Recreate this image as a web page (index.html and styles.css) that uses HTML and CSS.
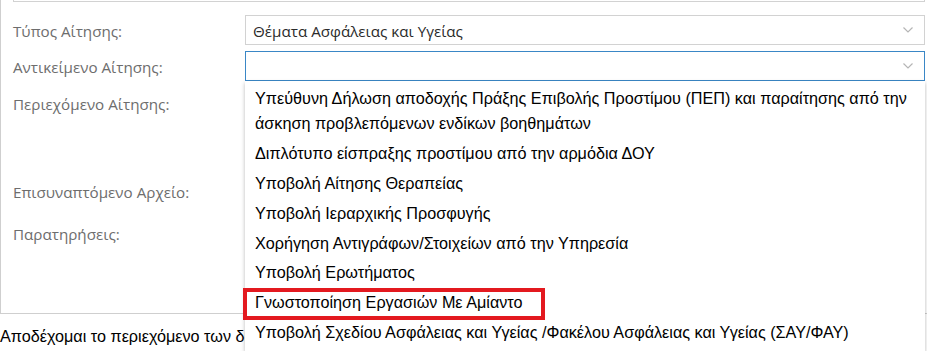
FILE: index.html
```html
<!DOCTYPE html>
<html lang="el">
<head>
<meta charset="utf-8">
<link rel="stylesheet" href="styles.css">
</head>
<body>
<div class="panel">
  <div class="prev-field"></div>
  <div class="form">
    <div class="label">Τύπος Αίτησης:</div>
    <div class="select"><span class="value">Θέματα Ασφάλειας και Υγείας</span><svg class="chev" width="10" height="6" viewBox="0 0 10 6"><path d="M0.5 0.5 L5 5 L9.5 0.5" fill="none" stroke="#b5b5b5" stroke-width="1.2"/></svg></div>

    <div class="label">Αντικείμενο Αίτησης:</div>
    <div class="select focus"><span class="value"></span><svg class="chev" width="10" height="6" viewBox="0 0 10 6"><path d="M0.5 0.5 L5 5 L9.5 0.5" fill="none" stroke="#b5b5b5" stroke-width="1.2"/></svg></div>

    <div class="label">Περιεχόμενο Αίτησης:</div>
    <div class="textarea"></div>

    <div class="label">Επισυναπτόμενο Αρχείο:</div>
    <div class="file"></div>

    <div class="label">Παρατηρήσεις:</div>
    <div class="textarea"></div>
  </div>
</div>
<p class="accept">Αποδέχομαι το περιεχόμενο των δηλώσεων και των όρων χρήσης της ηλεκτρονικής υπηρεσίας</p>

<ul class="dropdown">
  <li>Υπεύθυνη Δήλωση αποδοχής Πράξης Επιβολής Προστίμου (ΠΕΠ) και παραίτησης από την άσκηση προβλεπόμενων ενδίκων βοηθημάτων</li>
  <li>Διπλότυπο είσπραξης προστίμου από την αρμόδια ΔΟΥ</li>
  <li>Υποβολή Αίτησης Θεραπείας</li>
  <li>Υποβολή Ιεραρχικής Προσφυγής</li>
  <li>Χορήγηση Αντιγράφων/Στοιχείων από την Υπηρεσία</li>
  <li>Υποβολή Ερωτήματος</li>
  <li>Γνωστοποίηση Εργασιών Με Αμίαντο</li>
  <li>Υποβολή Σχεδίου Ασφάλειας και Υγείας /Φακέλου Ασφάλειας και Υγείας (ΣΑΥ/ΦΑΥ)</li>
</ul>
<div class="highlight"></div>
</body>
</html>
```
FILE: styles.css
```css
html, body {
  margin: 0;
  padding: 0;
  background: #fff;
  overflow: hidden;
  width: 927px;
  height: 351px;
}
body {
  position: relative;
  font-family: "Open Sans", "Noto Sans", sans-serif;
}
.panel {
  width: 914px;
  height: 313px;
  border-left: 1px solid #cfcfcf;
  border-bottom: 1px solid #cfcfcf;
  padding-left: 12px;
  box-sizing: content-box;
}
.prev-field {
  width: 910px;
  height: 1px;
  border: 1px solid #d2d2d2;
  border-top: none;
}
.form {
  display: grid;
  grid-template-columns: 232px 680px;
  grid-template-rows: 30px 30px 82px 30px 82px;
  row-gap: 6px;
  margin-top: 13px;
}
.label {
  font-size: 15.2px;
  color: #6d6d6d;
  line-height: 30px;
  padding-top: 1px;
  white-space: nowrap;
}
.select {
  box-sizing: border-box;
  height: 30px;
  border: 1px solid #d2d2d2;
  display: flex;
  align-items: center;
  justify-content: space-between;
  padding: 2px 11px 0 7px;
  font-size: 15.2px;
  color: #2b2b2b;
}
.select.focus {
  border-color: #3a87c6;
}
.chev { display: block; margin-top: -2px; }
.textarea, .file {
  box-sizing: border-box;
  border: 1px solid #d2d2d2;
}
.form > :nth-child(5), .form > :nth-child(6) { margin-top: 1px; }
.form > :nth-child(7), .form > :nth-child(8) { margin-top: 1px; }
.form > :nth-child(9), .form > :nth-child(10) { margin-top: 7px; }
.accept {
  margin: 0;
  padding-top: 8px;
  font-family: "Liberation Sans", Arial, sans-serif;
  font-size: 16.2px;
  color: #000;
  white-space: nowrap;
  overflow: hidden;
  line-height: 28px;
}
.dropdown {
  position: absolute;
  left: 245px;
  top: 81px;
  width: 680px;
  margin: 0;
  padding: 3px 0 4px;
  list-style: none;
  box-sizing: border-box;
  background: #fff;
  box-shadow: 0 2px 4px rgba(0,0,0,0.28);
  font-family: "Liberation Sans", Arial, sans-serif;
  font-size: 16.2px;
  color: #000;
}
.dropdown li {
  padding: 2.4px 10px;
  line-height: 25px;
}
.highlight {
  position: absolute;
  left: 243px;
  top: 288px;
  width: 302px;
  height: 32px;
  box-sizing: border-box;
  border: 4px solid #e3191f;
}
```
